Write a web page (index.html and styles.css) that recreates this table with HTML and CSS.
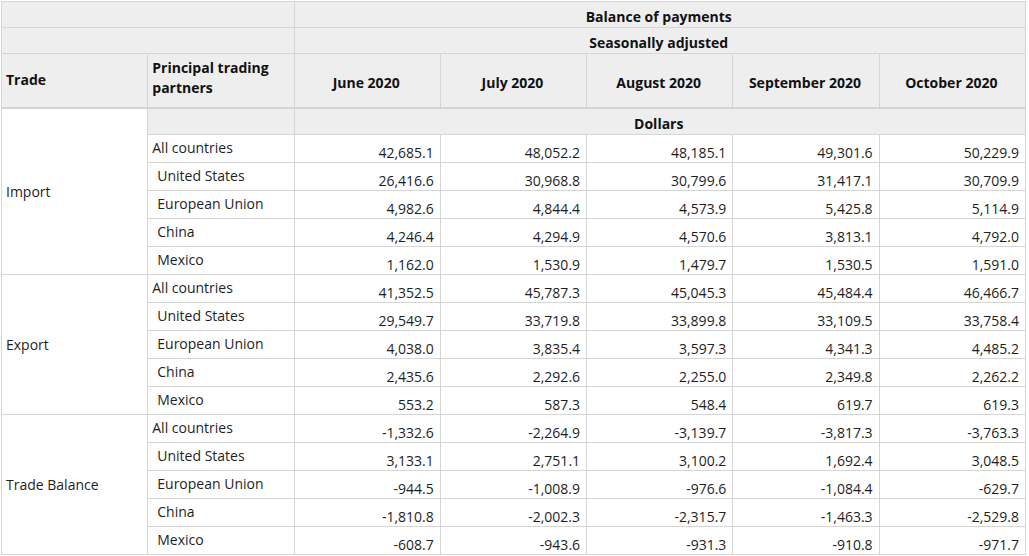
FILE: index.html
```html
<!DOCTYPE html>
<html lang="en">
<head>
<meta charset="utf-8">
<title>Balance of payments</title>
<link rel="stylesheet" href="styles.css">
</head>
<body>
<div class="wrap">
<table class="bop">
  <colgroup>
    <col class="c"><col class="c"><col class="c"><col class="c"><col class="c"><col class="c"><col class="c">
  </colgroup>
  <thead>
    <tr>
      <th class="h-top" colspan="2"></th>
      <th class="h-top center" colspan="5">Balance of payments</th>
    </tr>
    <tr>
      <th class="h-top" colspan="2"></th>
      <th class="h-top center" colspan="5">Seasonally adjusted</th>
    </tr>
    <tr class="h-main">
      <th class="h-trade">Trade</th>
      <th class="h-partner">Principal trading partners</th>
      <th class="h-month">June 2020</th>
      <th class="h-month">July 2020</th>
      <th class="h-month">August 2020</th>
      <th class="h-month">September 2020</th>
      <th class="h-month">October 2020</th>
    </tr>
  </thead>
  <tbody>
    <tr>
      <td class="group" rowspan="6">Import</td>
      <td class="unit"></td>
      <td class="unit center" colspan="5">Dollars</td>
    </tr>
    <tr><td class="p">All countries</td><td class="n">42,685.1</td><td class="n">48,052.2</td><td class="n">48,185.1</td><td class="n">49,301.6</td><td class="n">50,229.9</td></tr>
    <tr><td class="p sub">United States</td><td class="n">26,416.6</td><td class="n">30,968.8</td><td class="n">30,799.6</td><td class="n">31,417.1</td><td class="n">30,709.9</td></tr>
    <tr><td class="p sub">European Union</td><td class="n">4,982.6</td><td class="n">4,844.4</td><td class="n">4,573.9</td><td class="n">5,425.8</td><td class="n">5,114.9</td></tr>
    <tr><td class="p sub">China</td><td class="n">4,246.4</td><td class="n">4,294.9</td><td class="n">4,570.6</td><td class="n">3,813.1</td><td class="n">4,792.0</td></tr>
    <tr><td class="p sub">Mexico</td><td class="n">1,162.0</td><td class="n">1,530.9</td><td class="n">1,479.7</td><td class="n">1,530.5</td><td class="n">1,591.0</td></tr>

    <tr><td class="group" rowspan="5">Export</td><td class="p">All countries</td><td class="n">41,352.5</td><td class="n">45,787.3</td><td class="n">45,045.3</td><td class="n">45,484.4</td><td class="n">46,466.7</td></tr>
    <tr><td class="p sub">United States</td><td class="n">29,549.7</td><td class="n">33,719.8</td><td class="n">33,899.8</td><td class="n">33,109.5</td><td class="n">33,758.4</td></tr>
    <tr><td class="p sub">European Union</td><td class="n">4,038.0</td><td class="n">3,835.4</td><td class="n">3,597.3</td><td class="n">4,341.3</td><td class="n">4,485.2</td></tr>
    <tr><td class="p sub">China</td><td class="n">2,435.6</td><td class="n">2,292.6</td><td class="n">2,255.0</td><td class="n">2,349.8</td><td class="n">2,262.2</td></tr>
    <tr><td class="p sub">Mexico</td><td class="n">553.2</td><td class="n">587.3</td><td class="n">548.4</td><td class="n">619.7</td><td class="n">619.3</td></tr>

    <tr><td class="group" rowspan="5">Trade Balance</td><td class="p">All countries</td><td class="n">-1,332.6</td><td class="n">-2,264.9</td><td class="n">-3,139.7</td><td class="n">-3,817.3</td><td class="n">-3,763.3</td></tr>
    <tr><td class="p sub">United States</td><td class="n">3,133.1</td><td class="n">2,751.1</td><td class="n">3,100.2</td><td class="n">1,692.4</td><td class="n">3,048.5</td></tr>
    <tr><td class="p sub">European Union</td><td class="n">-944.5</td><td class="n">-1,008.9</td><td class="n">-976.6</td><td class="n">-1,084.4</td><td class="n">-629.7</td></tr>
    <tr><td class="p sub">China</td><td class="n">-1,810.8</td><td class="n">-2,002.3</td><td class="n">-2,315.7</td><td class="n">-1,463.3</td><td class="n">-2,529.8</td></tr>
    <tr><td class="p sub">Mexico</td><td class="n">-608.7</td><td class="n">-943.6</td><td class="n">-931.3</td><td class="n">-910.8</td><td class="n">-971.7</td></tr>
  </tbody>
</table>
</div>
</body>
</html>
```

FILE: styles.css
```css
html, body {
  margin: 0;
  padding: 0;
  background: #ffffff;
}

body {
  font-family: "Open Sans", "Noto Sans", "Liberation Sans", sans-serif;
  font-size: 14px;
  color: #1e1e1e;
}

.wrap {
  padding: 1px 0 0 1px;
}

.bop {
  border-collapse: collapse;
  table-layout: fixed;
  width: 1025px;
}

.bop col.c {
  width: 146px;
}

.bop th,
.bop td {
  border: 1px solid #d5d5d5;
  padding: 0 6px 0 4px;
  line-height: 19px;
  vertical-align: top;
  text-align: left;
  overflow: hidden;
}

.bop th {
  background: #eeeeee;
  font-weight: 700;
  color: #111111;
}

.center {
  text-align: center !important;
}

.h-top {
  height: 19px;
  padding-top: 5px !important;
  padding-bottom: 1px !important;
}

.h-main th {
  border-bottom: 2px solid #d5d5d5;
}

.h-trade {
  padding-top: 16px !important;
}

.h-partner {
  line-height: 20px !important;
  padding-top: 4px !important;
  padding-bottom: 9px !important;
}

.h-month {
  text-align: center !important;
  padding-top: 19px !important;
}

.unit {
  background: #eeeeee;
  font-weight: 700;
  color: #111111;
  height: 19px;
  padding-top: 5px !important;
  padding-bottom: 1px !important;
}

.group {
  vertical-align: middle !important;
  background: #ffffff;
}

.p {
  height: 19px;
  padding-top: 3px !important;
  padding-bottom: 5px !important;
}

.p.sub {
  padding-left: 9px;
}

.n {
  text-align: right !important;
  vertical-align: bottom !important;
  padding-bottom: 0;
}
```
